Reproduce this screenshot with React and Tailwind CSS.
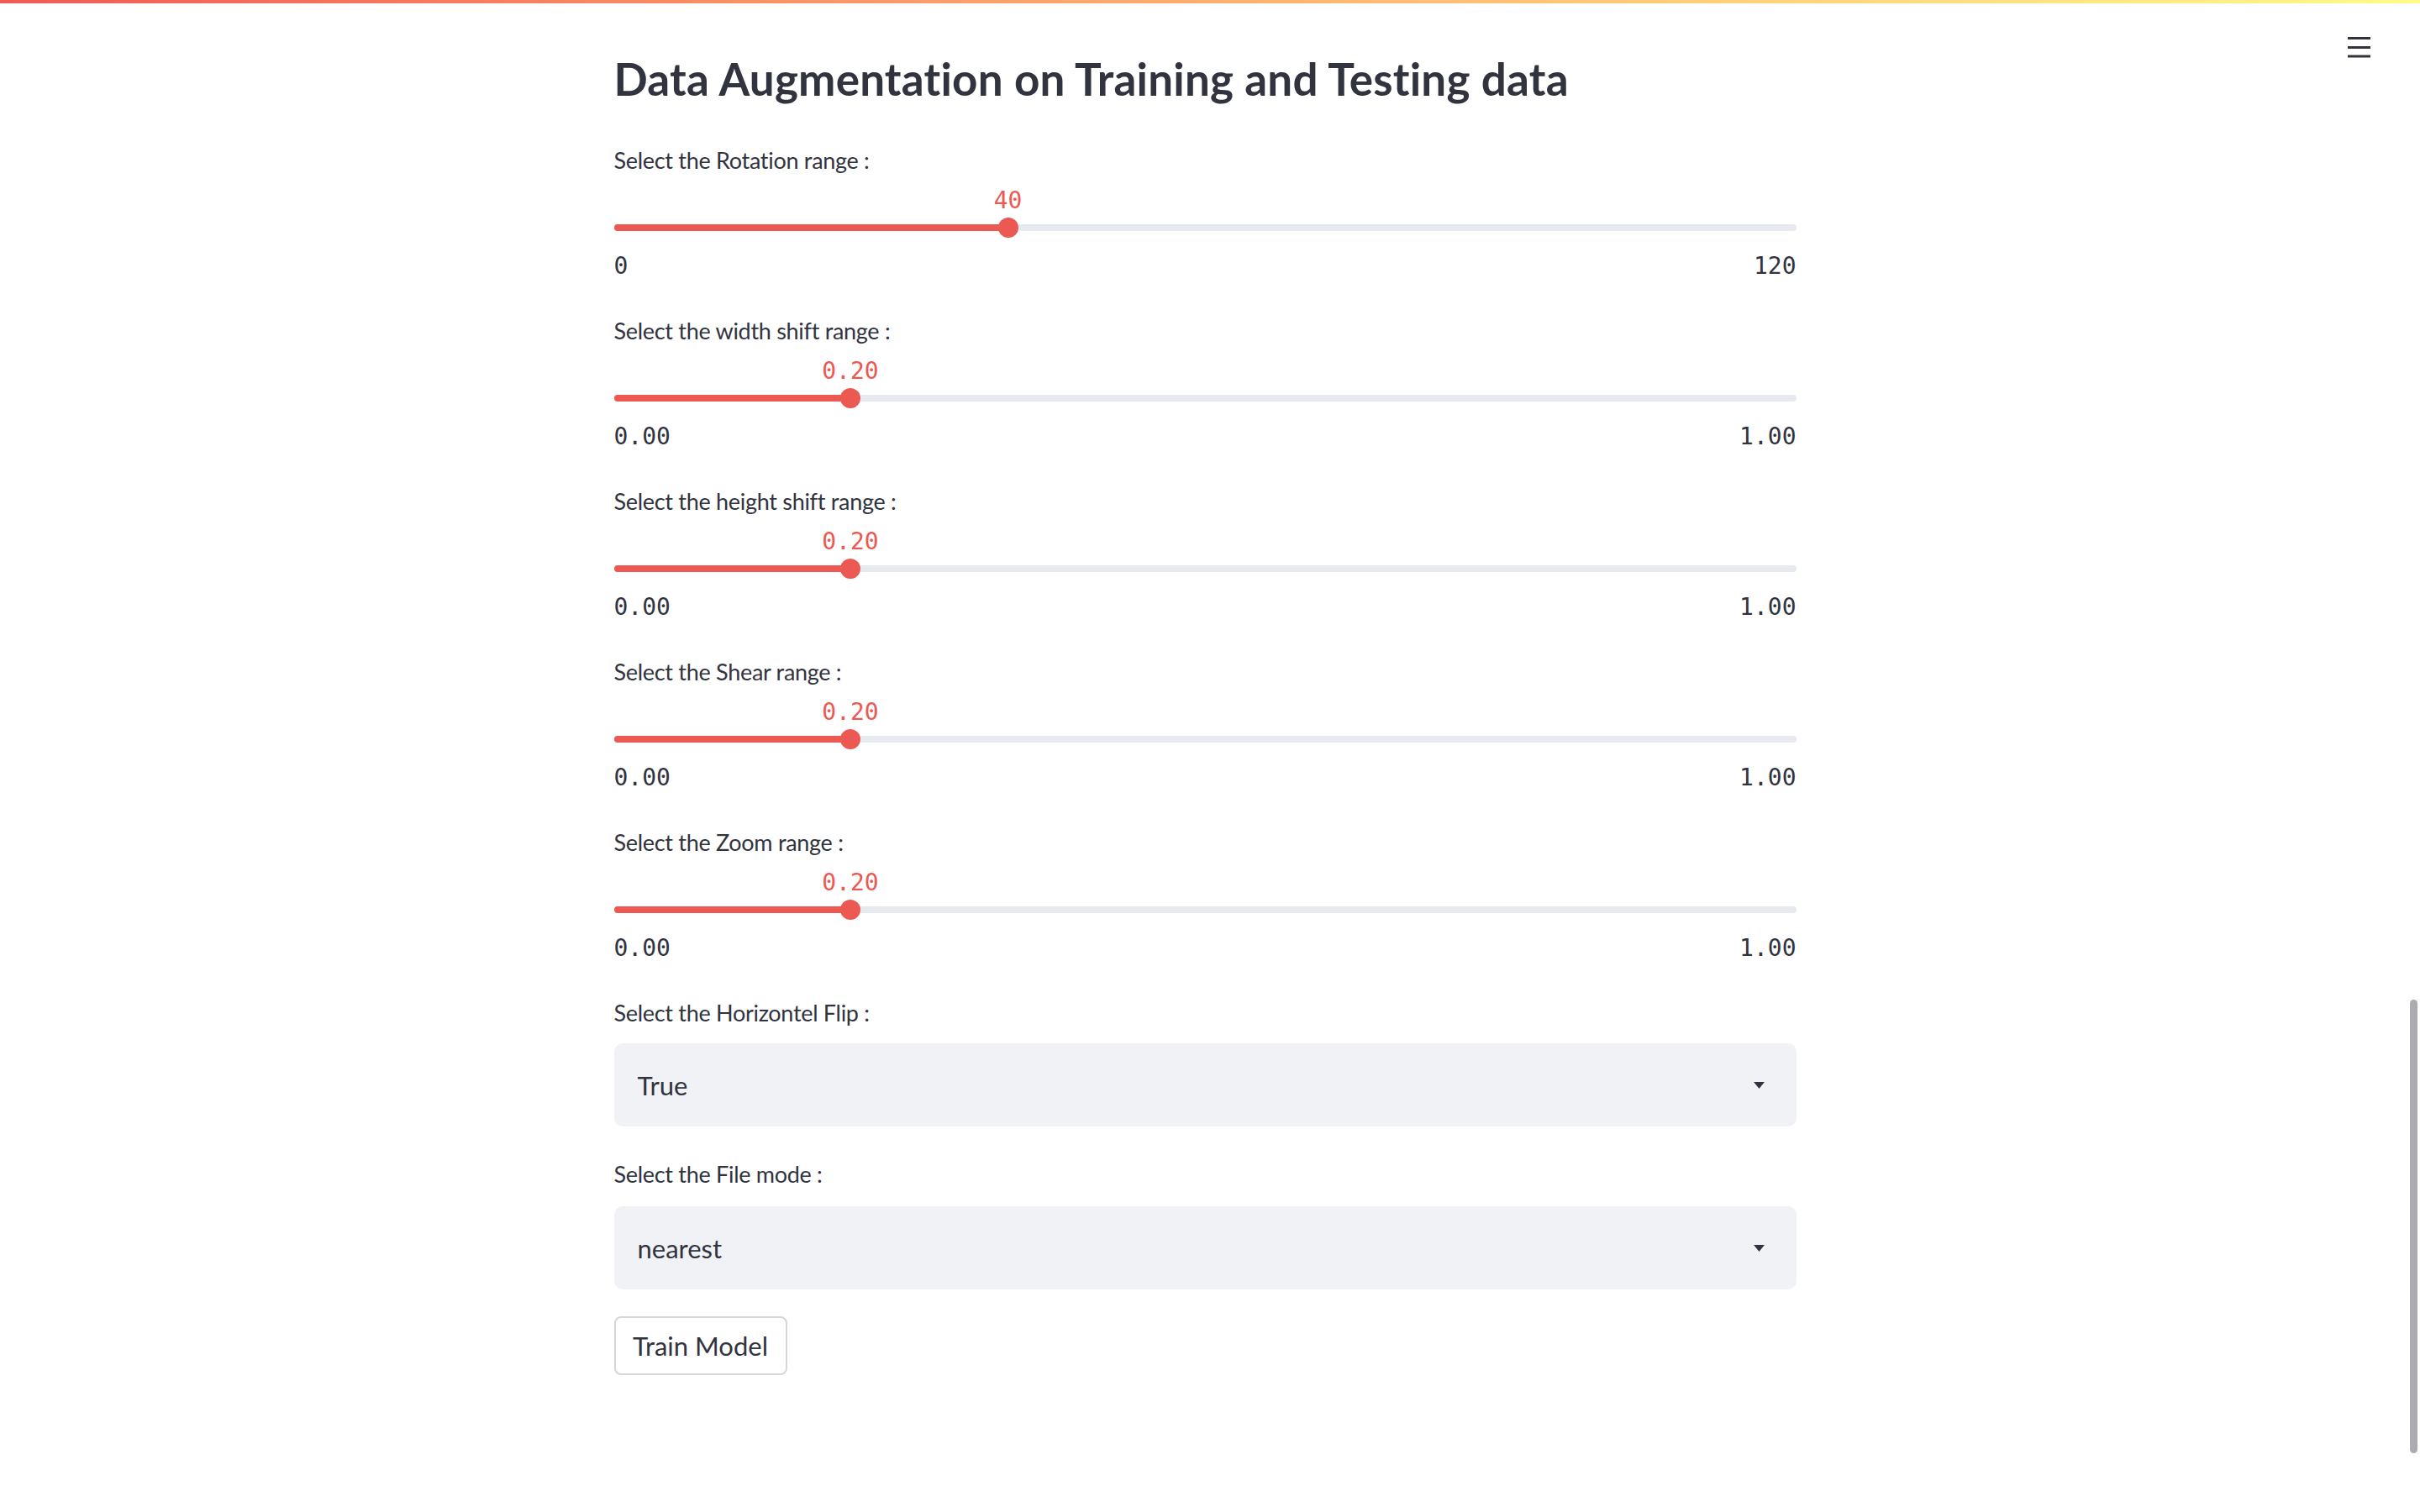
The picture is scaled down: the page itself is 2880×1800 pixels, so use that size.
import React from "react";

const sliders = [
  { label: "Select the Rotation range :", value: "40", pct: 1 / 3, min: "0", max: "120" },
  { label: "Select the width shift range :", value: "0.20", pct: 0.2, min: "0.00", max: "1.00" },
  { label: "Select the height shift range :", value: "0.20", pct: 0.2, min: "0.00", max: "1.00" },
  { label: "Select the Shear range :", value: "0.20", pct: 0.2, min: "0.00", max: "1.00" },
  { label: "Select the Zoom range :", value: "0.20", pct: 0.2, min: "0.00", max: "1.00" },
];

function Label({ children, className = "" }) {
  return (
    <div className={`text-[27px] leading-[40px] tracking-[-0.3px] text-[#31333f] ${className}`}>{children}</div>
  );
}

function Slider({ label, value, pct, min, max }) {
  const left = `${pct * 100}%`;
  return (
    <div className="h-[203px]">
      <Label>{label}</Label>
      <div className="relative mt-[9px] h-[38px]">
        <span
          className="absolute top-0 -translate-x-1/2 font-['DejaVu_Sans_Mono',monospace] text-[28px] leading-[38px] text-[#ec5953]"
          style={{ left }}
        >
          {value}
        </span>
      </div>
      <div className="relative mt-[1px] h-[24px]">
        <div className="absolute inset-x-0 top-[8px] h-[8px] rounded-full bg-[#e6e9ef]" />
        <div className="absolute left-0 top-[8px] h-[8px] rounded-full bg-[#ec5953]" style={{ width: left }} />
        <div
          className="absolute top-0 h-[24px] w-[24px] -translate-x-1/2 rounded-full bg-[#ec5953]"
          style={{ left }}
        />
      </div>
      <div className="mt-[14px] flex justify-between font-['DejaVu_Sans_Mono',monospace] text-[28px] leading-[40px] text-[#31333f]">
        <span>{min}</span>
        <span>{max}</span>
      </div>
    </div>
  );
}

function Select({ value }) {
  return (
    <div className="flex h-[99px] items-center justify-between rounded-[10px] bg-[#f0f2f6] pl-[28px] pr-[38px]">
      <span className="text-[31px] leading-[40px] text-[#31333f]">{value}</span>
      <svg width="13" height="8" viewBox="0 0 13 8">
        <polygon points="0,0 13,0 6.5,8" fill="#31333f" />
      </svg>
    </div>
  );
}

export default function App() {
  return (
    <div className="relative flex h-screen flex-col overflow-hidden bg-white font-[Lato,sans-serif]">
      <div className="h-[4px] shrink-0 bg-linear-to-r from-[#ef5a56] to-[#fffb88]" />
      <div className="flex min-h-0 flex-1">
        <main className="flex-1">
          <div className="mx-auto w-[1407px] pt-[57px]">
            <h1 className="text-[53px] font-bold leading-[65px] tracking-[0.2px] text-[#31333f]">
              Data Augmentation on Training and Testing data
            </h1>
            <div className="mt-[45px]">
              {sliders.map((s) => (
                <Slider key={s.label} {...s} />
              ))}
            </div>
            <Label>Select the Horizontel Flip :</Label>
            <div className="mt-[16px]">
              <Select value="True" />
            </div>
            <Label className="mt-[37px]">Select the File mode :</Label>
            <div className="mt-[18px]">
              <Select value="nearest" />
            </div>
            <button className="mt-[32px] h-[70px] w-[206px] rounded-[8px] border-2 border-[#d6d6d9] bg-white text-[31px] text-[#31333f]">
              Train Model
            </button>
          </div>
        </main>
        <div className="flex w-[12px] shrink-0 justify-start">
          <div className="mt-[1186px] h-[540px] w-[9px] rounded-full bg-[#ababb0]" />
        </div>
      </div>
      <button className="absolute right-[59px] top-[44px]">
        <svg width="27" height="25" viewBox="0 0 27 25">
          <line x1="0" y1="1.5" x2="27" y2="1.5" stroke="#31333f" strokeWidth="3" />
          <line x1="0" y1="12.5" x2="27" y2="12.5" stroke="#31333f" strokeWidth="3" />
          <line x1="0" y1="23" x2="27" y2="23" stroke="#31333f" strokeWidth="3" />
        </svg>
      </button>
    </div>
  );
}
